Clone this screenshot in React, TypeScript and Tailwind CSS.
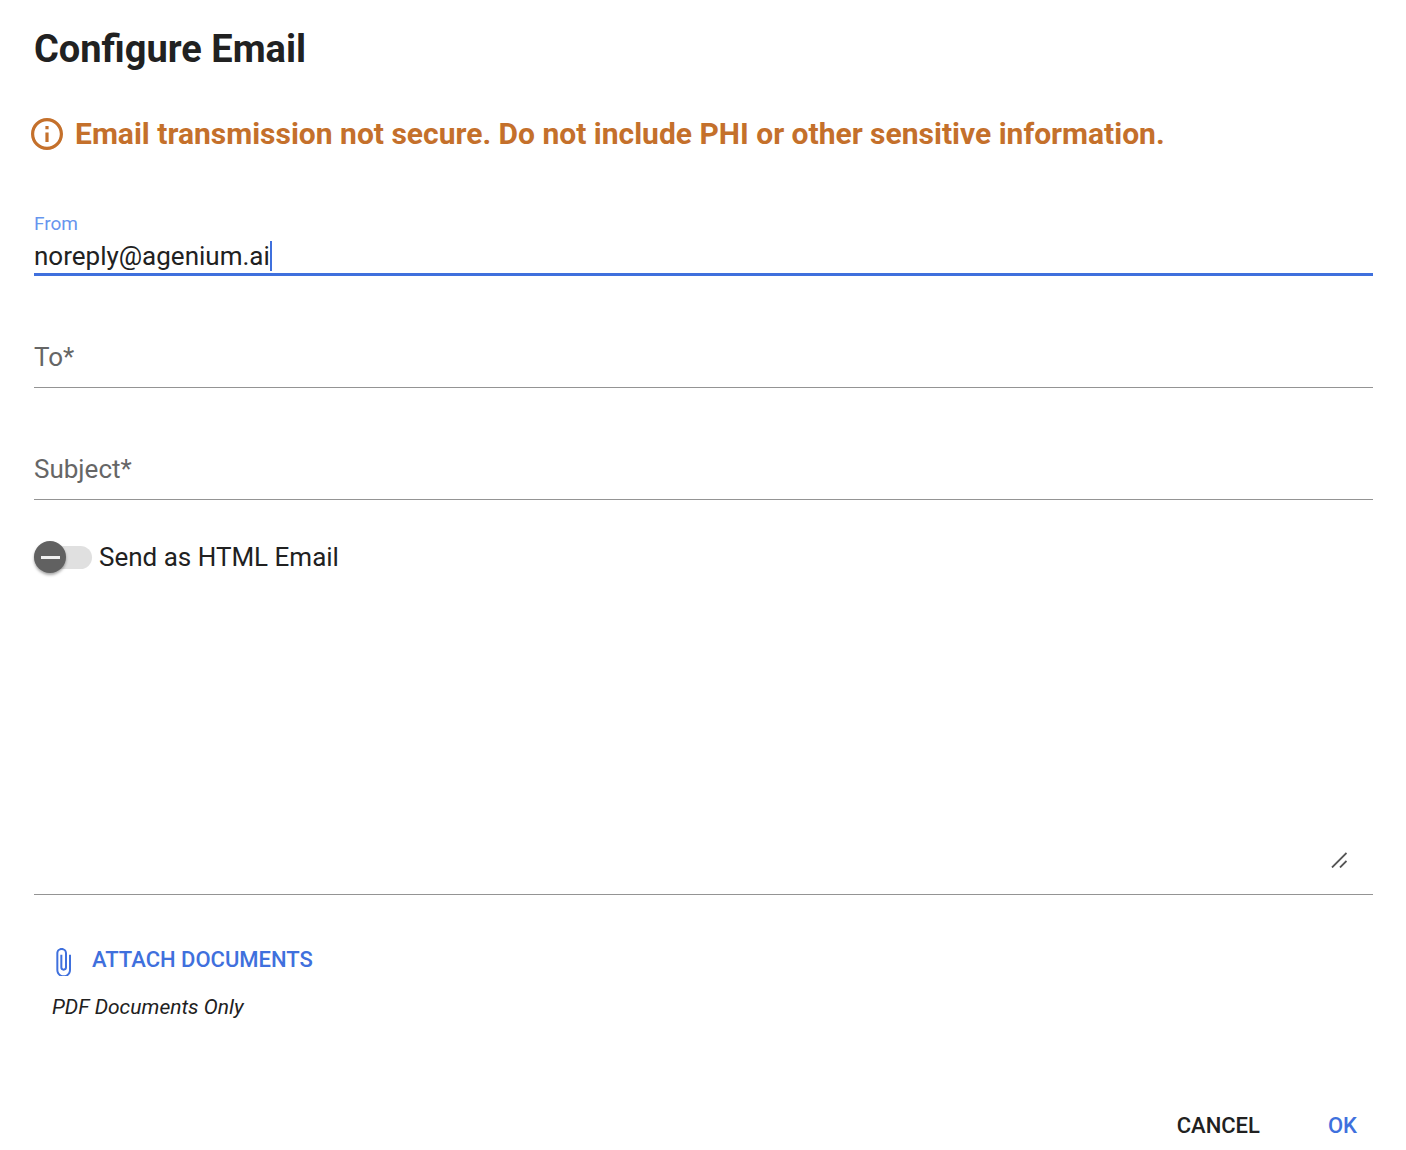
import { useState } from "react";
import { MdAttachFile, MdInfoOutline } from "react-icons/md";

type FieldProps = {
  id: string;
  label: string;
};

function EmptyField({ id, label }: FieldProps) {
  return (
    <div className="flex h-28 items-end border-b border-[#949494] pb-[14px] text-[26px] leading-8">
      <label htmlFor={id} className="shrink-0 text-[#666666]">
        {label}
      </label>
      <input id={id} type="text" required className="h-8 min-w-0 flex-1 bg-transparent outline-none" />
    </div>
  );
}

export default function App() {
  const [from, setFrom] = useState("noreply@agenium.ai");
  const [sendHtml, setSendHtml] = useState(false);

  return (
    <main className="min-h-screen bg-white pt-6 pr-[33px] pl-[34px] font-['Roboto',sans-serif] text-[#212121]">
      <h1 className="text-[38px] leading-[50px] font-bold">Configure Email</h1>

      {/* Security warning */}
      <div className="-ml-[3px] mt-10 flex items-center gap-3 text-[#c4702b]">
        <svg viewBox="2 2 20 20" className="size-8 shrink-0" aria-hidden="true">
          <MdInfoOutline size={24} />
        </svg>
        <p className="text-[30px] leading-10 font-bold">
          Email transmission not secure. Do not include PHI or other sensitive information.
        </p>
      </div>

      <form onSubmit={(e) => e.preventDefault()}>
        {/* Focused field with its text cursor */}
        <div className="mt-[58px] border-b-3 border-[#3f70dd]">
          <label htmlFor="from" className="block text-[19px] leading-6 text-[#6795ee]">
            From
          </label>
          <div className="mt-[5px] flex items-center pb-[2px]">
            <input
              id="from"
              type="text"
              value={from}
              onChange={(e) => setFrom(e.target.value)}
              className="field-sizing-content h-[30px] max-w-full bg-transparent text-[26px] leading-[30px] caret-transparent outline-none"
            />
            <span className="h-[30px] w-[2px] bg-[#3f70dd]" />
          </div>
        </div>

        <EmptyField id="to" label="To*" />
        <EmptyField id="subject" label="Subject*" />

        <label className="mt-[41px] flex items-center gap-[7px] text-[26px] leading-8">
          <input
            type="checkbox"
            role="switch"
            checked={sendHtml}
            onChange={(e) => setSendHtml(e.target.checked)}
            className="peer sr-only"
          />
          <span className="flex h-[23px] w-[58px] items-center rounded-full bg-[#e0e0e0] peer-checked:justify-end">
            <span className="flex size-8 shrink-0 items-center justify-center rounded-full bg-[#616161] shadow-[0_2px_3px_rgba(0,0,0,0.35)]">
              <span className="h-[3px] w-[19px] bg-[#f0f0f0]" />
            </span>
          </span>
          Send as HTML Email
        </label>

        <div className="relative mt-7 border-b border-[#949494] pb-6">
          <textarea
            aria-label="Message"
            className="block h-[269px] w-full resize-none bg-transparent text-[26px] leading-8 outline-none"
          />
          <svg
            viewBox="0 0 16 16"
            className="absolute right-[26px] bottom-[26px] size-4 stroke-[#555555]"
            aria-hidden="true"
          >
            <path d="M1 15.5 15.5 1M9 15.5 15.5 9" strokeWidth="1.8" />
          </svg>
        </div>

        <div className="mt-[49px] pl-[18px]">
          <button
            type="button"
            className="flex items-end gap-[21px] pl-[3px] text-[22px] leading-8 font-medium text-[#3f70dd]"
          >
            <svg viewBox="6 1 12 21" className="h-7 w-4" aria-hidden="true">
              <MdAttachFile size={24} />
            </svg>
            ATTACH DOCUMENTS
          </button>
          <p className="mt-[15px] text-[21px] leading-8 italic">PDF Documents Only</p>
        </div>

        <div className="mt-[87px] flex justify-end gap-[68px] pr-4 text-[22px] leading-8 font-medium">
          <button type="button">CANCEL</button>
          <button type="submit" className="text-[#3f70dd]">
            OK
          </button>
        </div>
      </form>
    </main>
  );
}
